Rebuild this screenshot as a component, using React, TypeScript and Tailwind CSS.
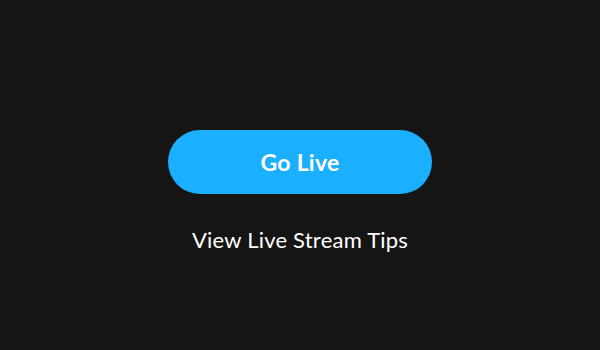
const App = () => {
  return (
    <div className="w-[600px] h-[350px] bg-[#151515] flex flex-col items-center pt-[130px] font-['Lato',sans-serif]">
      <button className="w-[264px] h-[64px] rounded-full bg-[#1aafff] text-white text-[23px] font-bold tracking-[0.01em]">
        Go Live
      </button>
      <a className="mt-[32px] text-white text-[22px] leading-[28px] tracking-[0.01em] font-normal">
        View Live Stream Tips
      </a>
    </div>
  );
};

export default App;
